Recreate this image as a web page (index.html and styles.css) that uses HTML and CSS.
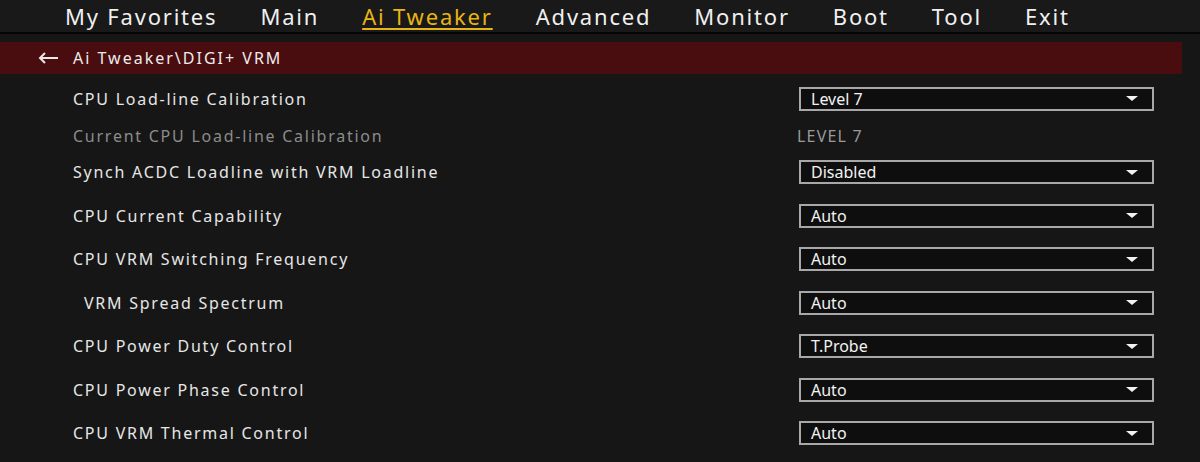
FILE: index.html
```html
<!DOCTYPE html>
<html lang="en">
<head>
    <meta charset="UTF-8">
    <meta name="viewport" content="width=device-width, initial-scale=1.0">
    <title>Ai Tweaker - DIGI+ VRM</title>
    <link rel="stylesheet" href="styles.css">
</head>
<body>
    <nav class="tabs">
        <span class="tab">My Favorites</span>
        <span class="tab">Main</span>
        <span class="tab active">Ai Tweaker</span>
        <span class="tab">Advanced</span>
        <span class="tab">Monitor</span>
        <span class="tab">Boot</span>
        <span class="tab">Tool</span>
        <span class="tab">Exit</span>
    </nav>

    <div class="crumb">
        <svg class="back" width="22" height="14" viewBox="0 0 22 14">
            <path d="M21 7H3M8 2L3 7l5 5" fill="none" stroke="#e8e8e8" stroke-width="2"/>
        </svg>
        <span>Ai Tweaker\DIGI+ VRM</span>
    </div>

    <div class="settings">
        <div class="row">
            <span class="label">CPU Load-line Calibration</span>
            <div class="select"><span>Level 7</span><i class="caret"></i></div>
        </div>
        <div class="row info">
            <span class="label">Current CPU Load-line Calibration</span>
            <span class="value">LEVEL 7</span>
        </div>
        <div class="row">
            <span class="label">Synch ACDC Loadline with VRM Loadline</span>
            <div class="select"><span>Disabled</span><i class="caret"></i></div>
        </div>
        <div class="row">
            <span class="label">CPU Current Capability</span>
            <div class="select"><span>Auto</span><i class="caret"></i></div>
        </div>
        <div class="row">
            <span class="label">CPU VRM Switching Frequency</span>
            <div class="select"><span>Auto</span><i class="caret"></i></div>
        </div>
        <div class="row">
            <span class="label sub">VRM Spread Spectrum</span>
            <div class="select"><span>Auto</span><i class="caret"></i></div>
        </div>
        <div class="row">
            <span class="label">CPU Power Duty Control</span>
            <div class="select"><span>T.Probe</span><i class="caret"></i></div>
        </div>
        <div class="row">
            <span class="label">CPU Power Phase Control</span>
            <div class="select"><span>Auto</span><i class="caret"></i></div>
        </div>
        <div class="row">
            <span class="label">CPU VRM Thermal Control</span>
            <div class="select"><span>Auto</span><i class="caret"></i></div>
        </div>
    </div>
</body>
</html>
```

FILE: styles.css
```css
body {
    margin: 0;
    background-color: #161616;
    color: #e6e6e6;
    font-family: "Noto Sans", "Open Sans", sans-serif;
    height: 462px;
    overflow: hidden;
}

.tabs {
    display: flex;
    height: 34px;
    padding-left: 65px;
    background-color: #191919;
    border-bottom: 2px solid #050505;
    box-sizing: border-box;
}

.tab {
    font-size: 22px;
    line-height: 33px;
    color: #f0f0f0;
    margin-right: 43px;
    letter-spacing: 1.8px;
}

.tab.active {
    color: #e8b514;
    text-decoration: underline;
    text-decoration-thickness: 2px;
    text-underline-offset: 3px;
}

.crumb {
    display: flex;
    align-items: center;
    margin-top: 8px;
    width: 1182px;
    height: 32px;
    background-color: #4a0d0f;
    padding-left: 37px;
    box-sizing: border-box;
    font-size: 16px;
    letter-spacing: 2px;
    color: #ececec;
}

.crumb .back {
    margin-right: 14px;
}

.settings {
    padding-top: 3px;
}

.row {
    display: flex;
    align-items: center;
    justify-content: space-between;
    height: 43.5px;
    padding-left: 73px;
    padding-right: 46px;
}

.row.info {
    height: 30px;
}

.label {
    font-size: 16px;
    letter-spacing: 1.75px;
}

.label.sub {
    padding-left: 11px;
}

.info .label {
    color: #8c8c8c;
}

.info .value {
    width: 357px;
    font-size: 16px;
    letter-spacing: 1.2px;
    color: #9a9a9a;
}

.select {
    display: flex;
    align-items: center;
    justify-content: space-between;
    width: 355px;
    height: 24px;
    border: 2px solid #a8a8a8;
    background-color: #0e0e0e;
    box-sizing: border-box;
    padding: 0 14px 0 10px;
    font-size: 16px;
    color: #f2f2f2;
}

.caret {
    width: 0;
    height: 0;
    border-left: 6px solid transparent;
    border-right: 6px solid transparent;
    border-top: 5px solid #f2f2f2;
}
```
